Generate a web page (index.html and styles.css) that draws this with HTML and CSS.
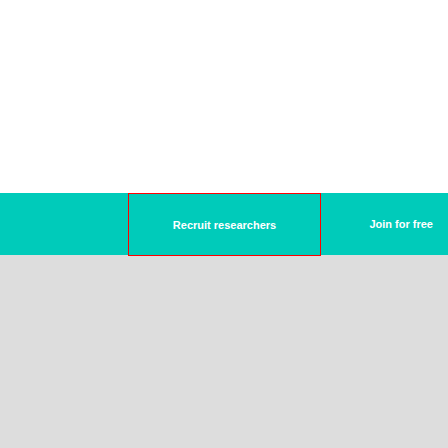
FILE: index.html
```html
<!DOCTYPE html>
<html>
<head>
<meta charset="utf-8">
<link rel="stylesheet" href="styles.css">
</head>
<body>
<div class="top"></div>
<nav class="bar">
  <div class="spacer"></div>
  <a class="recruit">Recruit researchers</a>
  <a class="join">Join for free</a>
</nav>
<div class="rest"></div>
</body>
</html>
```
FILE: styles.css
```css
html, body {
  margin: 0;
  padding: 0;
  height: 100%;
}
body {
  background: #dddddd;
  font-family: "Liberation Sans", Arial, sans-serif;
  display: flex;
  flex-direction: column;
}
.top {
  height: 193px;
  background: #ffffff;
}
.bar {
  height: 62px;
  background: #00cbba;
  display: flex;
  align-items: stretch;
}
.spacer {
  width: 128px;
}
.recruit {
  width: 193px;
  height: 63px;
  box-sizing: border-box;
  border: 1px solid #ff0000;
  display: flex;
  align-items: center;
  justify-content: center;
  color: #ffffff;
  font-weight: bold;
  font-size: 11px;
}
.join {
  flex: 1;
  display: flex;
  align-items: center;
  justify-content: flex-end;
  padding-right: 15px;
  color: #ffffff;
  font-weight: bold;
  font-size: 11px;
}
.rest {
  flex: 1;
}
```
